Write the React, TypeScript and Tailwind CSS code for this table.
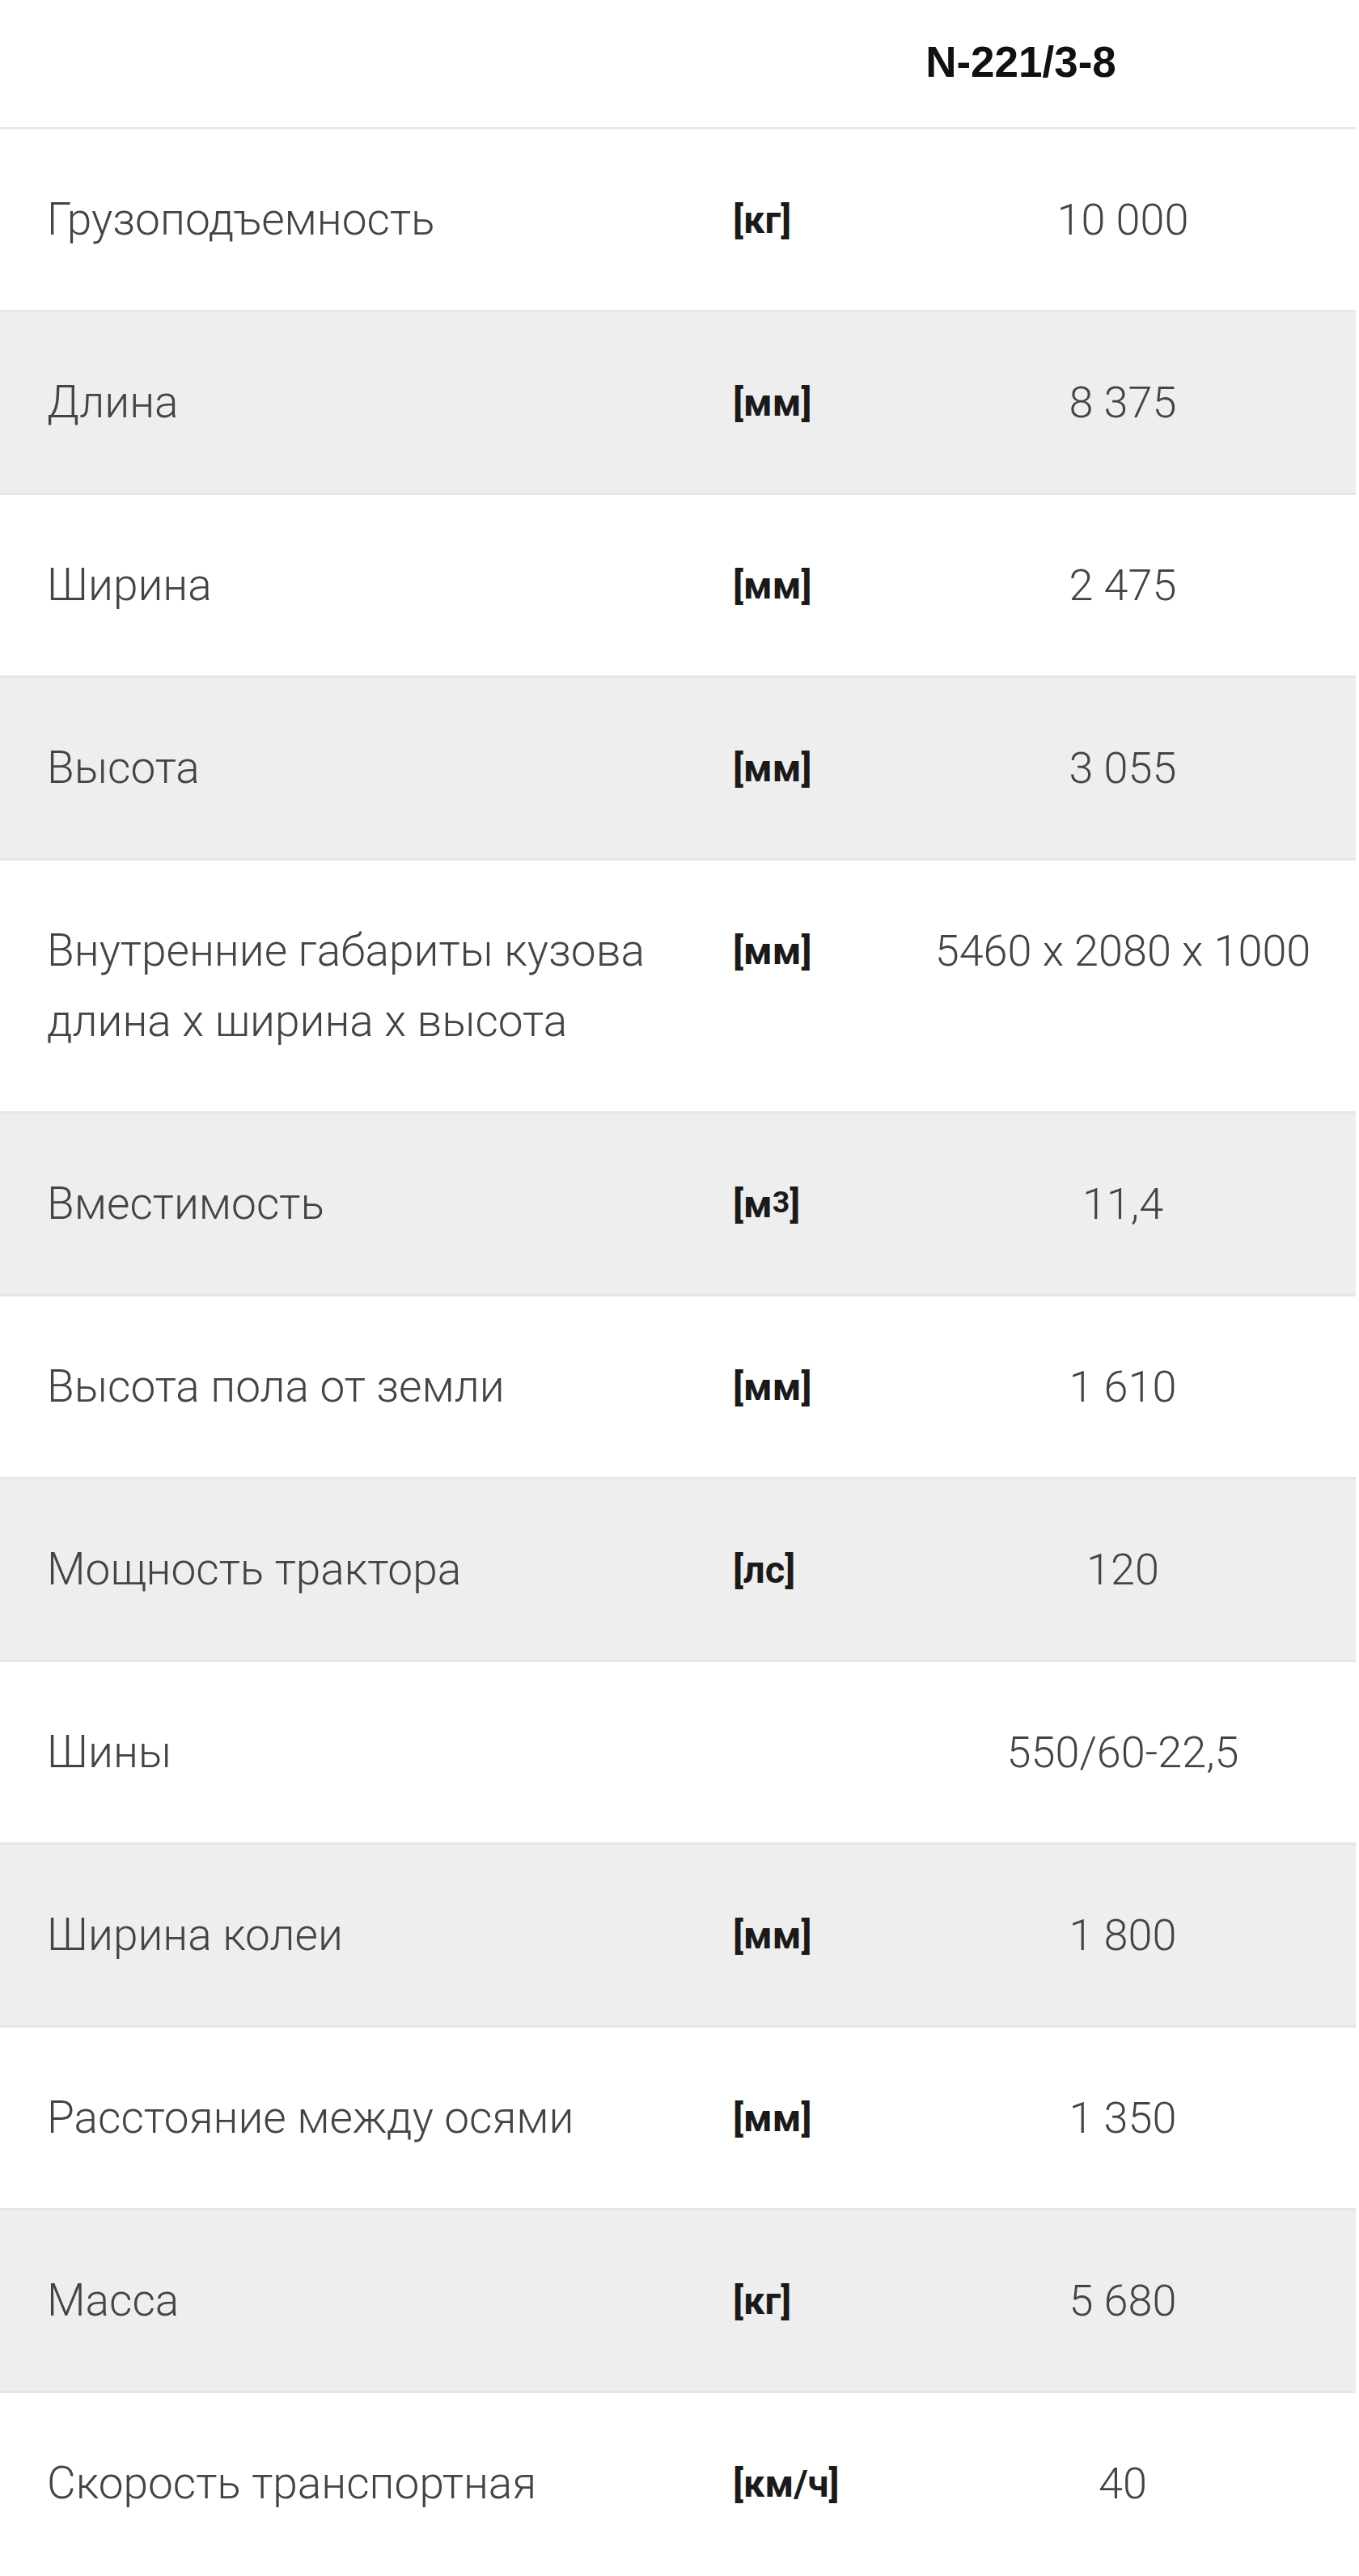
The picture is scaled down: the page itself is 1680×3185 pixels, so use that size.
import React from 'react'

type Row = { label: React.ReactNode; unit?: React.ReactNode; value: string }

const rows: Row[] = [
  { label: 'Грузоподъемность', unit: '[кг]', value: '10 000' },
  { label: 'Длина', unit: '[мм]', value: '8 375' },
  { label: 'Ширина', unit: '[мм]', value: '2 475' },
  { label: 'Высота', unit: '[мм]', value: '3 055' },
  {
    label: (
      <>
        Внутренние габариты кузова
        <br />
        длина х ширина х высота
      </>
    ),
    unit: '[мм]',
    value: '5460 x 2080 x 1000',
  },
  {
    label: 'Вместимость',
    unit: (
      <>
        [м<sup className="text-[0.8em] leading-none relative -top-[0.15em]">3</sup>]
      </>
    ),
    value: '11,4',
  },
  { label: 'Высота пола от земли', unit: '[мм]', value: '1 610' },
  { label: 'Мощность трактора', unit: '[лс]', value: '120' },
  { label: 'Шины', value: '550/60-22,5' },
  { label: 'Ширина колеи', unit: '[мм]', value: '1 800' },
  { label: 'Расстояние между осями', unit: '[мм]', value: '1 350' },
  { label: 'Масса', unit: '[кг]', value: '5 680' },
  { label: 'Скорость транспортная', unit: '[км/ч]', value: '40' },
]

export default function App() {
  return (
    <div className="w-[1680px] bg-white font-['Roboto',sans-serif]">
      <table className="w-[1676px] border-collapse text-left">
        <thead>
          <tr className="border-b-[3px] border-[#e8e8e8]">
            <th className="w-[848px] h-[158px]"></th>
            <th
              colSpan={2}
              className="h-[158px] text-center align-middle font-['Liberation_Sans',Arial,sans-serif] font-bold text-[53px] text-[#111] pb-[4px]"
            >
              N-221/3-8
            </th>
          </tr>
        </thead>
        <tbody>
          {rows.map((r, i) => (
            <tr
              key={i}
              className={`${i < rows.length - 1 ? 'border-b-[3px] border-[#e6e6e6]' : ''} ${i % 2 === 1 ? 'bg-[#eeeeee]' : 'bg-white'}`}
            >
              <td className="w-[848px] pl-[58px] pt-[68px] pb-[68px] align-top text-[55px] leading-[87px] font-light text-[#444444]">
                {r.label}
              </td>
              <td className="w-[252px] pl-[58px] pt-[68px] align-top text-[47px] leading-[87px] font-bold text-[#1a1a1a]">
                {r.unit}
              </td>
              <td className="pt-[68px] align-top text-center text-[54px] leading-[87px] font-light text-[#444444]">
                {r.value}
              </td>
            </tr>
          ))}
        </tbody>
      </table>
    </div>
  )
}
